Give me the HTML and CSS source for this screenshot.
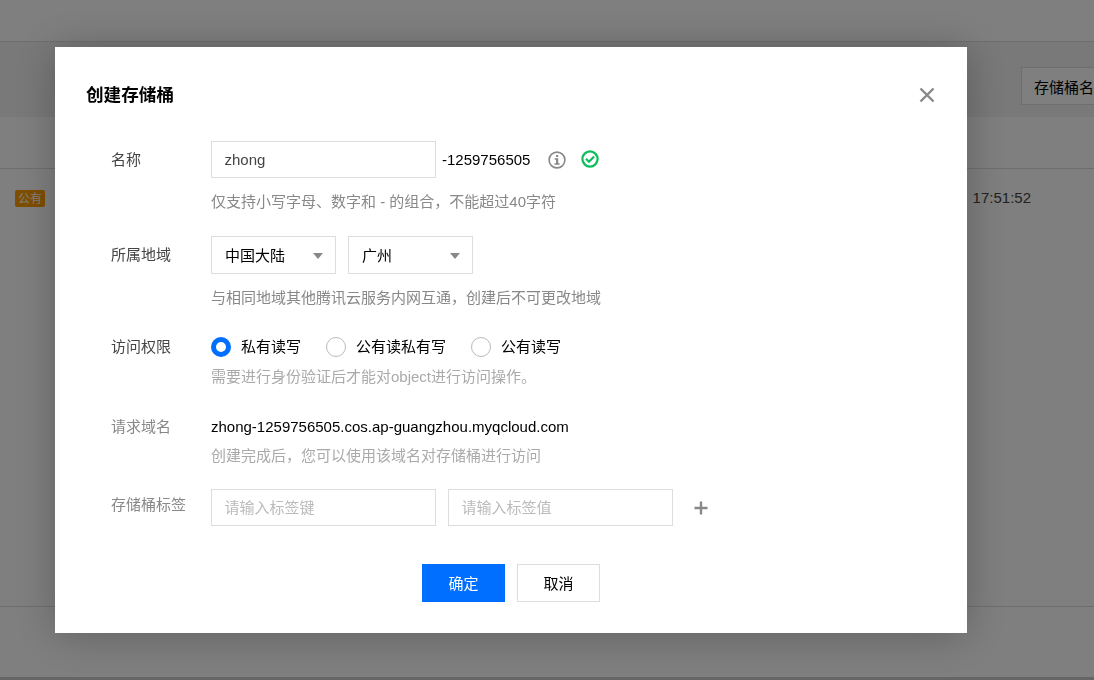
FILE: index.html
```html
<!DOCTYPE html>
<html lang="zh-CN">
<head>
  <meta charset="UTF-8" />
  <meta name="viewport" content="width=device-width, initial-scale=1.0" />
  <title>存储桶列表</title>
  <link rel="stylesheet" href="styles.css">
</head>
<body>
  <div class="page">
    <div class="page-header"></div>
    <div class="toolbar"><div class="filter">存储桶名</div></div>
    <div class="table-head"></div>
    <div class="table-body">
      <span class="tag">公有</span>
      <span class="time">17:51:52</span>
    </div>
    <div class="page-footer"></div>
  </div>

  <div class="overlay">
    <div class="dialog">
      <div class="dialog-header">
        <h3>创建存储桶</h3>
        <svg class="close" width="16" height="16" viewBox="0 0 16 16"><path d="M1.5 1.5l13 13M14.5 1.5l-13 13" /></svg>
      </div>

      <div class="row row-name">
        <label>名称</label>
        <div class="field">
          <div class="line">
            <input type="text" class="input" value="zhong" />
            <span class="appid">-1259756505</span>
            <svg class="icon-info" width="18" height="18" viewBox="0 0 18 18">
              <circle cx="9" cy="9" r="7.9" />
              <path d="M8 4h2.2v2H8zM6.7 7.3h3.5v5h1.4v1.4H6.5v-1.4H8V8.7H6.7z" />
            </svg>
            <svg class="icon-ok" width="18" height="18" viewBox="0 0 18 18">
              <circle cx="9" cy="9" r="7.6" />
              <path d="M5 8.7l3 3 5.1-5.2" />
            </svg>
          </div>
          <p class="hint">仅支持小写字母、数字和 - 的组合，不能超过40字符</p>
        </div>
      </div>

      <div class="row row-region">
        <label>所属地域</label>
        <div class="field">
          <div class="line">
            <div class="select">中国大陆<i class="arrow"></i></div>
            <div class="select">广州<i class="arrow"></i></div>
          </div>
          <p class="hint">与相同地域其他腾讯云服务内网互通，创建后不可更改地域</p>
        </div>
      </div>

      <div class="row row-access">
        <label>访问权限</label>
        <div class="field">
          <div class="line">
            <span class="radio checked">私有读写</span>
            <span class="radio">公有读私有写</span>
            <span class="radio">公有读写</span>
          </div>
          <p class="hint light">需要进行身份验证后才能对object进行访问操作。</p>
        </div>
      </div>

      <div class="row row-domain">
        <label>请求域名</label>
        <div class="field">
          <div class="domain">zhong-1259756505.cos.ap-guangzhou.myqcloud.com</div>
          <p class="hint light">创建完成后，您可以使用该域名对存储桶进行访问</p>
        </div>
      </div>

      <div class="row row-tags">
        <label>存储桶标签</label>
        <div class="line">
          <input type="text" class="input" placeholder="请输入标签键" />
          <input type="text" class="input" placeholder="请输入标签值" />
          <svg class="add" width="14" height="14" viewBox="0 0 14 14"><path d="M7 .5v13M.5 7h13" /></svg>
        </div>
      </div>

      <div class="actions">
        <button class="btn primary">确定</button>
        <button class="btn">取消</button>
      </div>
    </div>
  </div>
</body>
</html>
```
FILE: styles.css
```css
*, *::before { box-sizing: border-box; }
body { margin: 0; height: 680px; overflow: hidden; background: #fff; color: #000; font: 15px/20px "Liberation Sans", "Noto Sans CJK SC", sans-serif; }
p, h3 { margin: 0; }

/* Bucket list behind the dialog */
.page-header { height: 42px; border-bottom: 1px solid #ddd; }
.toolbar { height: 75px; background: #f2f2f2; padding: 25px 0 0 1021px; }
.filter { height: 38px; border: 1px solid #ddd; border-right: 0; background: #fff; padding-left: 12px; line-height: 39px; white-space: nowrap; }
.table-head { height: 52px; border-bottom: 1px solid #ddd; }
.table-body { display: flex; align-items: flex-start; justify-content: space-between; height: 438px; padding: 19px 63px 0 15px; border-bottom: 1px solid #ddd; }
.tag { width: 30px; height: 17px; margin-top: 2px; border-radius: 2px; background: #ff9d00; color: #fff; font-size: 12px; line-height: 18px; text-align: center; }
.time { color: #444; }
.page-footer { height: 73px; border-bottom: 3px solid #ccc; }

.overlay { position: fixed; inset: 0; background: rgba(0,0,0,0.5); padding: 47px 0 0 55px; }
.dialog { width: 912px; height: 586px; padding: 0 31px; background: #fff; box-shadow: 0 2px 40px rgba(0,0,0,0.25); }
.dialog-header { display: flex; justify-content: space-between; height: 94px; padding-top: 38px; }
.dialog-header h3 { font-size: 17.6px; line-height: 20px; }
.close { margin: 2px 1px 0 0; fill: none; stroke: #888; stroke-width: 2.4; }

.row { display: flex; align-items: flex-start; padding-left: 25px; }
.row label { width: 100px; flex: none; color: #444; line-height: 37px; }
.row-name { height: 95px; }
.row-region { height: 101px; }
.row-access { height: 80px; }
.row-access label { line-height: 19px; }
.row-domain { height: 72px; }
.row-domain label { color: #888; line-height: 19px; }
.row-tags { height: 75px; }
.row-tags label { color: #888; line-height: 31px; }

.line { display: flex; align-items: center; }
.input { width: 225px; height: 37px; border: 1px solid #ddd; padding: 0 12.5px; outline: none; color: #444; font: inherit; }
.input::placeholder { color: #bbb; }
.input + .input { margin-left: 12px; }
.appid { margin: 0 18px 0 6px; }
.icon-info { fill: #888; margin: 1px 15px 0 0; }
.icon-info circle { fill: none; stroke: #888; stroke-width: 1.6; }
.icon-ok { margin-bottom: 2px; fill: none; stroke: #0abf5b; stroke-width: 2.2; }
.hint { margin-top: 14px; color: #888; }
.hint.light { margin-top: 10px; color: #aaa; }
.row-domain .hint.light { margin-top: 9px; }

.select { display: flex; align-items: center; justify-content: space-between; width: 125px; height: 38px; margin-right: 12px; padding: 1px 12px 0 13px; border: 1px solid #ddd; }
.arrow { border: 5px solid transparent; border-top: 6px solid #888; border-bottom: 0; }
.radio { display: flex; align-items: center; margin-right: 25px; }
.radio::before { content: ""; width: 20px; height: 20px; margin-right: 10px; border: 1px solid #bbb; border-radius: 50%; }
.radio.checked::before { border: 5px solid #006eff; }
.add { margin-left: 21px; stroke: #888; stroke-width: 2.4; }

.actions { display: flex; justify-content: center; gap: 12px; }
.btn { width: 83px; height: 38px; padding: 1px 0 0; border: 1px solid #ddd; background: #fff; color: #000; font: inherit; }
.btn.primary { border-color: #006eff; background: #006eff; color: #fff; }
```
